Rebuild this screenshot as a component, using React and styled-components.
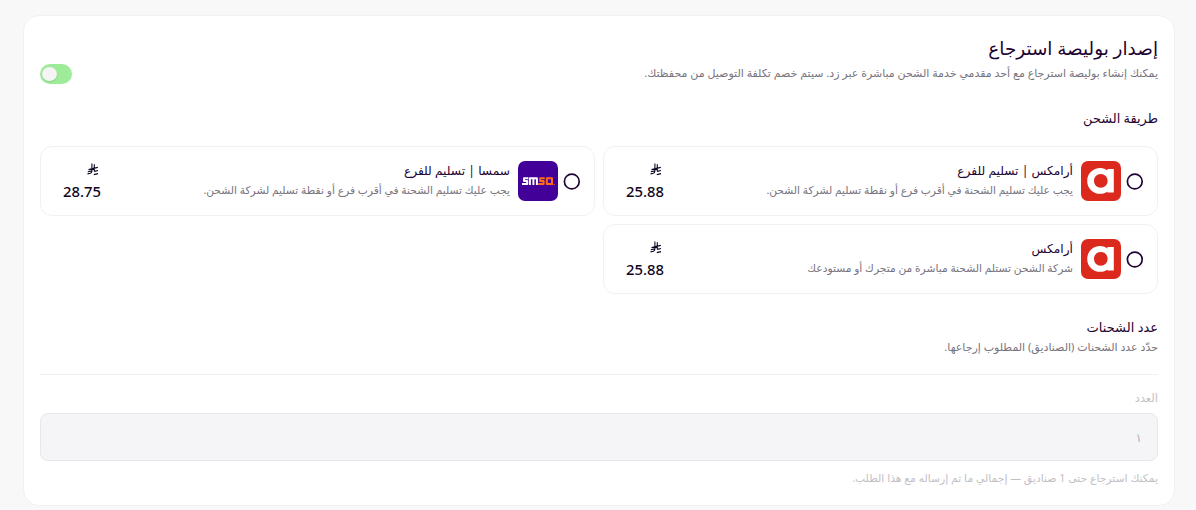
import React from 'react';
import styled, { createGlobalStyle } from 'styled-components';

const options = [
  {
    id: 1,
    carrier: 'aramex',
    title: 'أرامكس | تسليم للفرع',
    text: 'يجب عليك تسليم الشحنة في أقرب فرع أو نقطة تسليم لشركة الشحن.',
    price: '25.88',
  },
  {
    id: 2,
    carrier: 'smsa',
    title: 'سمسا | تسليم للفرع',
    text: 'يجب عليك تسليم الشحنة في أقرب فرع أو نقطة تسليم لشركة الشحن.',
    price: '28.75',
  },
  {
    id: 3,
    carrier: 'aramex',
    title: 'أرامكس',
    text: 'شركة الشحن تستلم الشحنة مباشرة من متجرك أو مستودعك',
    price: '25.88',
  },
];

const AramexLogo = () => (
  <Logo viewBox='0 0 40 40' $bg='#dc291e'>
    <path
      fill='#fff'
      fillRule='evenodd'
      d='M26.4 8H32.8V31.6H26.4V30.4C24.6 31.9 22.2 32.8 19.4 32.8C12 32.8 6.2 27.3 6.2 19.9C6.2 12.5 12 7 19.4 7C22.2 7 24.6 7.9 26.4 9.4ZM19.8 12.9C15.8 12.9 13 15.8 13 19.8C13 23.8 15.8 26.7 19.8 26.7C23.8 26.7 26.6 23.8 26.6 19.8C26.6 15.8 23.8 12.9 19.8 12.9Z'
    />
  </Logo>
);

const SmsaLogo = () => (
  <Logo viewBox='0 0 40 40' $bg='#430098'>
    <g fill='none' strokeWidth='2' strokeLinejoin='round'>
      <path stroke='#fff' d='M10.4 17.2H6V20H9.2V23H4' />
      <path stroke='#fff' d='M11.9 24V17.2H18.9V24M15.4 17V24' />
      <path stroke='#ff6a1f' d='M26.8 17.2H22.2V20H25.6V23H20.2' />
      <path stroke='#ff6a1f' d='M34 24V17.2H28.8V23H34' />
    </g>
    <rect x='35.7' y='23' width='1' height='1' fill='#ff6a1f' />
  </Logo>
);

const Riyal = () => (
  <RiyalIcon viewBox='0 0 12 13'>
    <path d='M4.9 .6V8Q4.9 9.8 3.4 10.2L.5 10.9M7.3 1.2V8.6M1.5 6.6L10.8 4.4M.8 8.8L4.9 7.9M7.3 8.4L11 7.5M6.8 11.6L11 10.6' />
  </RiyalIcon>
);

const Option = ({ carrier, title, text, price }) => {
  return (
    <OptionCard>
      <Radio viewBox='0 0 17 17' role='radio' aria-checked='false'>
        <circle cx='8.8' cy='8.5' r='7.4' />
      </Radio>
      {carrier === 'aramex' ? <AramexLogo /> : <SmsaLogo />}
      <OptionInfo>
        <OptionTitle>{title}</OptionTitle>
        <OptionText>{text}</OptionText>
      </OptionInfo>
      <Price>
        <Riyal />
        <span>{price}</span>
      </Price>
    </OptionCard>
  );
};

const App = () => {
  return (
    <>
      <GlobalStyle />
      <Card>
        <Header>
          <div>
            <Title>إصدار بوليصة استرجاع</Title>
            <Muted>
              يمكنك إنشاء بوليصة استرجاع مع أحد مقدمي خدمة الشحن مباشرة عبر زد.
              سيتم خصم تكلفة التوصيل من محفظتك.
            </Muted>
          </div>
          <Switch type='button' aria-label='تفعيل' />
        </Header>
        <Subtitle>طريقة الشحن</Subtitle>
        <Options>
          {options.map((option) => (
            <Option key={option.id} {...option} />
          ))}
        </Options>
        <CountHeader>
          <CountTitle>عدد الشحنات</CountTitle>
          <Muted>حدّد عدد الشحنات (الصناديق) المطلوب إرجاعها.</Muted>
        </CountHeader>
        <Label htmlFor='count'>العدد</Label>
        <Input id='count' defaultValue='١' disabled />
        <Hint>يمكنك استرجاع حتى 1 صناديق — إجمالي ما تم إرساله مع هذا الطلب.</Hint>
      </Card>
    </>
  );
};

const GlobalStyle = createGlobalStyle`
  * {
    box-sizing: border-box;
    margin: 0;
  }
  html {
    overflow: hidden;
  }
  body {
    background: #f8f8f8;
    color: #1d0433;
    direction: rtl;
    font-family: 'Noto Sans', 'DejaVu Sans', sans-serif;
  }
`;

const Card = styled.section`
  height: 491px;
  margin: 15px 21px 0 23px;
  padding: 16px;
  background: #fff;
  border: 1px solid #f1f1f2;
  border-radius: 16px;
`;

const Header = styled.header`
  display: flex;
  justify-content: space-between;
  height: 68px;
`;

const Title = styled.h1`
  height: 32px;
  font-size: 18.4px;
  font-weight: 400;
  line-height: 32px;
  white-space: nowrap;
`;

const Muted = styled.p`
  color: #77737d;
  font-size: 11px;
  line-height: 18px;
  white-space: nowrap;
`;

const Switch = styled.button`
  width: 32px;
  height: 20px;
  margin-top: 32px;
  padding: 3px 2px;
  display: flex;
  justify-content: flex-end;
  background: #9eec9a;
  border: none;
  border-radius: 10px;
  &::after {
    content: '';
    width: 15px;
    height: 14px;
    border-radius: 50%;
    background: #f5f5f5;
    box-shadow: 0 1px 2px rgba(0, 0, 0, 0.12);
  }
`;

const Subtitle = styled.h2`
  height: 46px;
  font-size: 12.9px;
  font-weight: 400;
  line-height: 36px;
`;

const Options = styled.div`
  display: grid;
  grid-template-columns: 1fr 1fr;
  grid-auto-rows: 70px;
  gap: 8px;
`;

const OptionCard = styled.label`
  display: flex;
  align-items: center;
  padding: 0 14px 0 22px;
  border: 1px solid #f1f1f2;
  border-radius: 12px;
`;

const Radio = styled.svg`
  flex: none;
  width: 17px;
  height: 17px;
  margin-left: 5px;
  overflow: visible;
  fill: none;
  stroke: #1d0433;
  stroke-width: 1.7;
`;

const Logo = styled.svg`
  flex: none;
  width: 40px;
  height: 40px;
  margin-left: 8px;
  border-radius: 7px;
  background: ${({ $bg }) => $bg};
`;

const OptionInfo = styled.div`
  flex: 1;
  padding-bottom: 3px;
`;

const OptionTitle = styled.h3`
  height: 20px;
  font-size: 12.2px;
  font-weight: 400;
  line-height: 20px;
  white-space: nowrap;
`;

const OptionText = styled(Muted)`
  font-size: 10.68px;
`;

const Price = styled.div`
  width: 38px;
  padding-top: 2px;
  color: #0e0620;
  font-size: 14.8px;
  font-weight: 500;
  line-height: 22px;
  direction: ltr;
  display: flex;
  flex-direction: column;
  align-items: flex-end;
`;

const RiyalIcon = styled.svg`
  width: 12px;
  height: 13px;
  margin: 0 2px 4px 0;
  fill: none;
  stroke: #0e0620;
  stroke-width: 1.1;
`;

const CountHeader = styled.div`
  height: 63px;
  margin-top: 18px;
  margin-bottom: 13px;
  border-bottom: 1px solid #f1f1f2;
`;

const CountTitle = styled.h2`
  font-size: 13px;
  font-weight: 400;
  height: 26px;
  line-height: 30px;
`;

const Label = styled.label`
  display: block;
  height: 25px;
  color: #c2c0c5;
  font-size: 11.4px;
  line-height: 20px;
`;

const Input = styled.input`
  display: block;
  width: 100%;
  height: 48px;
  padding: 0 15px;
  color: #b5b3ba;
  background: #f5f5f7;
  border: 1px solid #e8e7ec;
  border-radius: 8px;
  font-family: inherit;
  font-size: 12px;
`;

const Hint = styled.p`
  margin-top: 7px;
  color: #c2c0c5;
  font-size: 10.8px;
  line-height: 20px;
`;

export default App;
